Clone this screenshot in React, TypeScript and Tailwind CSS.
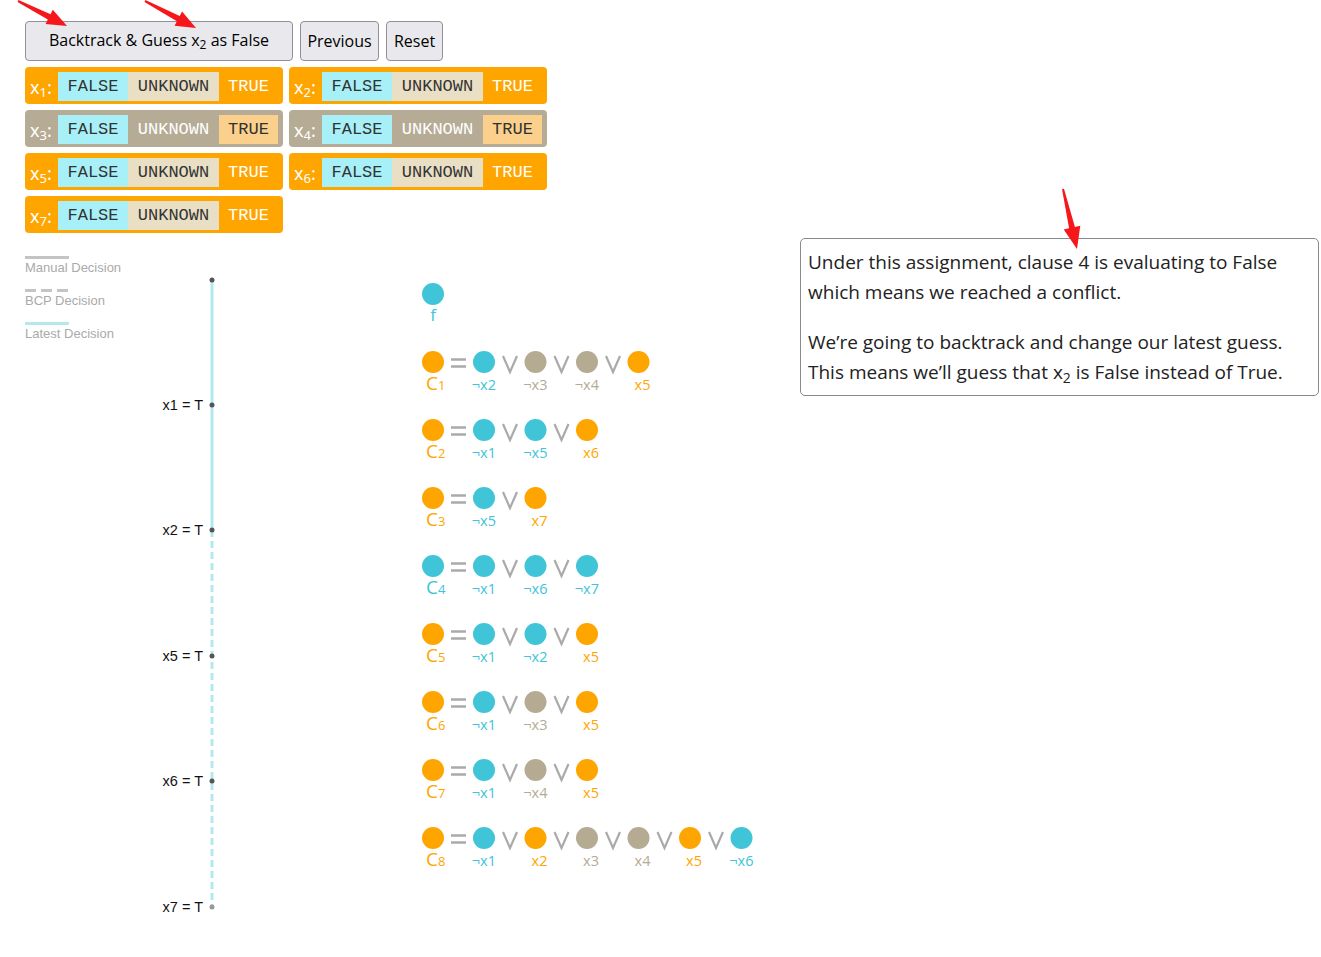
import React from 'react';

const ORANGE = '#ffa500';
const CYAN = '#40c4d8';
const TAN = '#b5ab93';

type Kind = 'o' | 'c' | 't';
const colorOf = (k: Kind) => (k === 'o' ? ORANGE : k === 'c' ? CYAN : TAN);

// clause colour, then terms as [label, colour]
const clauses: { kind: Kind; terms: [string, Kind][] }[] = [
  { kind: 'o', terms: [['¬x2', 'c'], ['¬x3', 't'], ['¬x4', 't'], ['x5', 'o']] },
  { kind: 'o', terms: [['¬x1', 'c'], ['¬x5', 'c'], ['x6', 'o']] },
  { kind: 'o', terms: [['¬x5', 'c'], ['x7', 'o']] },
  { kind: 'c', terms: [['¬x1', 'c'], ['¬x6', 'c'], ['¬x7', 'c']] },
  { kind: 'o', terms: [['¬x1', 'c'], ['¬x2', 'c'], ['x5', 'o']] },
  { kind: 'o', terms: [['¬x1', 'c'], ['¬x3', 't'], ['x5', 'o']] },
  { kind: 'o', terms: [['¬x1', 'c'], ['¬x4', 't'], ['x5', 'o']] },
  {
    kind: 'o',
    terms: [['¬x1', 'c'], ['x2', 'o'], ['x3', 't'], ['x4', 't'], ['x5', 'o'], ['¬x6', 'c']],
  },
];

const vars = [
  { n: 1, set: true },
  { n: 2, set: true },
  { n: 3, set: false },
  { n: 4, set: false },
  { n: 5, set: true },
  { n: 6, set: true },
  { n: 7, set: true },
];

function VarBox({ n, set }: { n: number; set: boolean }) {
  return (
    <div
      className={`flex items-center h-[37px] rounded-[4px] pt-[2px] ${set ? 'bg-[#ffa500]' : 'bg-[#b6ab94]'}`}
    >
      <span className="w-[33px] pl-[5px] text-white text-[18px] leading-none font-[family-name:'Noto_Sans',sans-serif]">
        x<sub className="text-[13px]">{n}</sub>:
      </span>
      <div className="flex font-[family-name:'Liberation_Mono',monospace] text-[17px] leading-[29px] text-[#333]">
        <span className="w-[70px] text-center bg-[#a8f0f8]">FALSE</span>
        {set ? (
          <span className="w-[91px] text-center bg-[#e9dfc5]">UNKNOWN</span>
        ) : (
          <span className="w-[91px] text-center text-white">UNKNOWN</span>
        )}
        {set ? (
          <span className="w-[59px] text-center text-white">TRUE</span>
        ) : (
          <span className="w-[59px] text-center bg-[#fad08c]">TRUE</span>
        )}
      </div>
    </div>
  );
}

function Legend() {
  return (
    <div className="w-[115px] pt-[18px] font-[family-name:'Liberation_Sans',sans-serif] text-[13px] leading-[18px] text-[#aaa]">
      <div className="h-[3px] w-[44px] bg-[#c4c4c4]" />
      <div className="mb-[12px]">Manual Decision</div>
      <div className="flex gap-[5px] w-[44px]">
        <div className="h-[3px] w-[11px] bg-[#c4c4c4]" />
        <div className="h-[3px] w-[11px] bg-[#c4c4c4]" />
        <div className="h-[3px] w-[11px] bg-[#c4c4c4]" />
      </div>
      <div className="mb-[12px]">BCP Decision</div>
      <div className="h-[3px] w-[44px] bg-[#b3e9ee]" />
      <div>Latest Decision</div>
    </div>
  );
}

function Tree() {
  const ys = [42, 167, 292, 418, 543, 669];
  const labels = ['x1 = T', 'x2 = T', 'x5 = T', 'x6 = T', 'x7 = T'];
  return (
    <svg width={80} height={690} className="shrink-0">
      <line x1={72} y1={42} x2={72} y2={292} stroke="#b3e9ee" strokeWidth={3} />
      <line
        x1={72}
        y1={292}
        x2={72}
        y2={669}
        stroke="#b3e9ee"
        strokeWidth={3}
        strokeDasharray="7 4"
      />
      {ys.map((y, i) => (
        <circle key={y} cx={72} cy={y} r={2.5} fill={i === ys.length - 1 ? '#999' : '#555'} />
      ))}
      {labels.map((l, i) => (
        <text
          key={l}
          x={63}
          y={ys[i + 1] + 5}
          textAnchor="end"
          fontSize={14.5}
          fontFamily="Liberation Sans, sans-serif"
          fill="#111"
        >
          {l}
        </text>
      ))}
    </svg>
  );
}

function Clauses() {
  const font = 'Open Sans, sans-serif';
  return (
    <svg width={350} height={640} className="shrink-0">
      <circle cx={18} cy={56} r={11} fill={CYAN} />
      <text x={18} y={83} textAnchor="middle" fontSize={17} fontFamily={font} fill={CYAN}>
        f
      </text>
      {clauses.map((c, i) => {
        const cy = 124 + 68 * i;
        return (
          <g key={i}>
            <circle cx={18} cy={cy} r={11} fill={colorOf(c.kind)} />
            <text x={11} y={cy + 28} fontFamily={font} fill={colorOf(c.kind)}>
              <tspan fontSize={19}>C</tspan>
              <tspan fontSize={13}>{i + 1}</tspan>
            </text>
            <line x1={36} y1={cy - 2.5} x2={51} y2={cy - 2.5} stroke="#aaa" strokeWidth={2.5} />
            <line x1={36} y1={cy + 4.5} x2={51} y2={cy + 4.5} stroke="#aaa" strokeWidth={2.5} />
            {c.terms.map(([label, k], j) => {
              const cx = 69 + 51.5 * j;
              const vx = cx - 25.5;
              return (
                <g key={j}>
                  {j > 0 && (
                    <polyline
                      points={`${vx - 7},${cy - 6} ${vx},${cy + 10} ${vx + 7},${cy - 6}`}
                      fill="none"
                      stroke="#aaa"
                      strokeWidth={2.2}
                    />
                  )}
                  <circle cx={cx} cy={cy} r={11} fill={colorOf(k)} />
                  <text
                    x={cx + 12}
                    y={cy + 28}
                    textAnchor="end"
                    fontSize={14.5}
                    fontFamily={font}
                    fill={colorOf(k)}
                  >
                    {label}
                  </text>
                </g>
              );
            })}
          </g>
        );
      })}
    </svg>
  );
}

function arrow(tx: number, ty: number, hx: number, hy: number, headLen: number, headW: number) {
  const dx = hx - tx;
  const dy = hy - ty;
  const len = Math.hypot(dx, dy);
  const ux = dx / len;
  const uy = dy / len;
  const px = -uy;
  const py = ux;
  const bx = hx - ux * headLen;
  const by = hy - uy * headLen;
  const tw = 1;
  const nw = 3;
  const pts = [
    [tx + px * tw, ty + py * tw],
    [bx + px * nw, by + py * nw],
    [bx + px * headW / 2, by + py * headW / 2],
    [hx, hy],
    [bx - px * headW / 2, by - py * headW / 2],
    [bx - px * nw, by - py * nw],
    [tx - px * tw, ty - py * tw],
  ];
  return pts.map((p) => p.join(',')).join(' ');
}

function Annotations() {
  return (
    <svg className="absolute left-0 top-0 pointer-events-none" width={1321} height={957}>
      <polygon points={arrow(18, 1, 67, 26, 20, 16)} fill="#f5171a" />
      <polygon points={arrow(145, 1, 196, 28, 20, 16)} fill="#f5171a" />
      <polygon points={arrow(1063, 189, 1077, 249, 22, 17)} fill="#f5171a" />
    </svg>
  );
}

export default function App() {
  return (
    <div className="relative w-[1321px] h-[957px] bg-white pl-[25px] pt-[21px] font-[family-name:'Open_Sans',sans-serif]">
      <div className="flex gap-[7px] text-[16px] text-black">
        <button className="w-[268px] h-[40px] bg-[#e9e9ed] border border-[#8f8f9d] rounded-[4px] pb-[2px]">
          Backtrack &amp; Guess x<sub className="text-[12px]">2</sub> as False
        </button>
        <button className="w-[79px] h-[40px] bg-[#e9e9ed] border border-[#8f8f9d] rounded-[4px]">
          Previous
        </button>
        <button className="w-[57px] h-[40px] bg-[#e9e9ed] border border-[#8f8f9d] rounded-[4px]">
          Reset
        </button>
      </div>

      <div className="grid grid-cols-[258px_258px] gap-[6px] mt-[6px]">
        {vars.map((v) => (
          <VarBox key={v.n} n={v.n} set={v.set} />
        ))}
      </div>

      <div className="flex mt-[5px]">
        <Legend />
        <Tree />
        <div className="ml-[195px]">
          <Clauses />
        </div>
        <div className="ml-[35px] w-[519px] self-start border border-[#8a8a8a] rounded-[5px] px-[7px] py-[8px] text-[19px] leading-[30px] text-[#222]">
          <p>
            Under this assignment, clause 4 is evaluating to False which means we reached a
            conflict.
          </p>
          <p className="mt-[20px]">
            We’re going to backtrack and change our latest guess. This means we’ll guess that x
            <sub className="text-[14px]">2</sub> is False instead of True.
          </p>
        </div>
      </div>

      <Annotations />
    </div>
  );
}
